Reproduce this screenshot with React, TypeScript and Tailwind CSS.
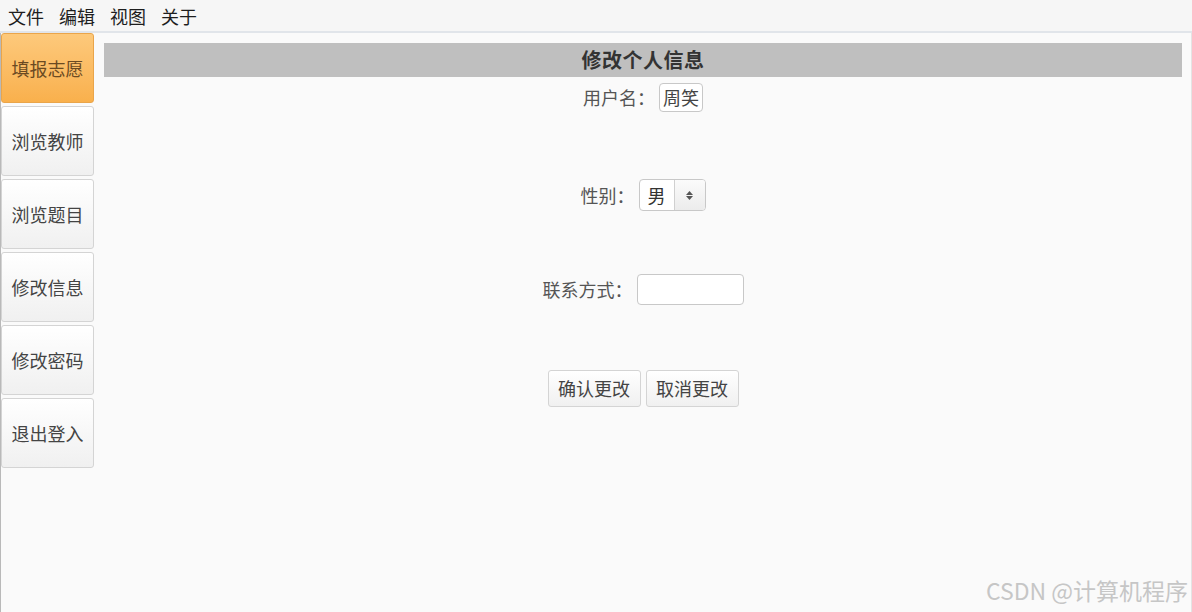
const cjk = '"Noto Sans CJK SC", "Noto Sans", sans-serif';

const menus = ["文件", "编辑", "视图", "关于"];
const navItems = ["填报志愿", "浏览教师", "浏览题目", "修改信息", "修改密码", "退出登入"];

function NavButton({ label, active }: { label: string; active?: boolean }) {
  return (
    <button
      className={
        active
          ? "h-[70px] w-[93px] rounded-[3px] border border-[#eaa54a] bg-gradient-to-b from-[#fdc97b] to-[#f9b04c] text-[18px] text-[#6b4a22]"
          : "h-[70px] w-[93px] rounded-[3px] border border-[#d4d4d4] bg-gradient-to-b from-white to-[#f0f0f0] text-[18px] text-[#444]"
      }
    >
      {label}
    </button>
  );
}

function SelectBox() {
  return (
    <div className="flex h-[32px] w-[67px] overflow-hidden rounded-[4px] border border-[#c8c8c8] bg-white">
      <div className="flex w-[34px] items-center justify-center text-[18px] text-[#333]">男</div>
      <div className="flex flex-1 flex-col items-center justify-center gap-[1px] border-l border-[#d0d0d0] bg-gradient-to-b from-[#fbfbfb] to-[#ececec]">
        <svg width="7" height="4" viewBox="0 0 7 4">
          <path d="M0 4 L3.5 0 L7 4 Z" fill="#555" />
        </svg>
        <svg width="7" height="4" viewBox="0 0 7 4">
          <path d="M0 0 L3.5 4 L7 0 Z" fill="#555" />
        </svg>
      </div>
    </div>
  );
}

export default function App() {
  return (
    <div
      className="relative flex h-[612px] w-[1192px] flex-col overflow-hidden bg-[#fafafa]"
      style={{ fontFamily: cjk }}
    >
      <div className="flex h-[33px] items-center gap-[15px] border-b-2 border-[#e1e5ea] bg-[#f6f6f6] pl-[8px] pt-[1px] text-[18px] text-[#1e1e1e]">
        {menus.map((m) => (
          <span key={m}>{m}</span>
        ))}
      </div>

      <div className="flex flex-1 border-l border-r border-[#b9b9b9] border-r-[#e4e4e4]">
        <div className="flex flex-col gap-[3px]">
          {navItems.map((n, i) => (
            <NavButton key={n} label={n} active={i === 0} />
          ))}
        </div>

        <div className="flex flex-1 flex-col items-center pl-[10px] pr-[9px] pt-[10px]">
          <div className="flex h-[34px] w-full items-center justify-center bg-[#bfbfbf] text-[20px] font-bold tracking-[0.5px] text-[#333]">
            修改个人信息
          </div>

          <div className="mt-[6px] flex items-center gap-[4px]">
            <span className="text-[18px] text-[#555]">用户名：</span>
            <div className="flex h-[29px] items-center rounded-[4px] border border-[#c8c8c8] bg-white px-[3px] text-[18px] text-[#444]">
              周笑
            </div>
          </div>

          <div className="mt-[67px] flex items-center gap-[4px]">
            <span className="text-[18px] text-[#555]">性别：</span>
            <SelectBox />
          </div>

          <div className="mt-[63px] flex items-center gap-[4px]">
            <span className="text-[18px] text-[#555]">联系方式：</span>
            <div className="h-[31px] w-[107px] rounded-[4px] border border-[#c8c8c8] bg-white" />
          </div>

          <div className="mt-[65px] flex gap-[5px]">
            <button className="h-[37px] w-[93px] rounded-[3px] border border-[#d4d4d4] bg-gradient-to-b from-white to-[#f0f0f0] text-[18px] text-[#444]">
              确认更改
            </button>
            <button className="h-[37px] w-[93px] rounded-[3px] border border-[#d4d4d4] bg-gradient-to-b from-white to-[#f0f0f0] text-[18px] text-[#444]">
              取消更改
            </button>
          </div>
        </div>
      </div>

      <span className="absolute bottom-[5px] right-[4px] text-[23px] text-[#c6c6c6]">
        CSDN @计算机程序
      </span>
    </div>
  );
}
